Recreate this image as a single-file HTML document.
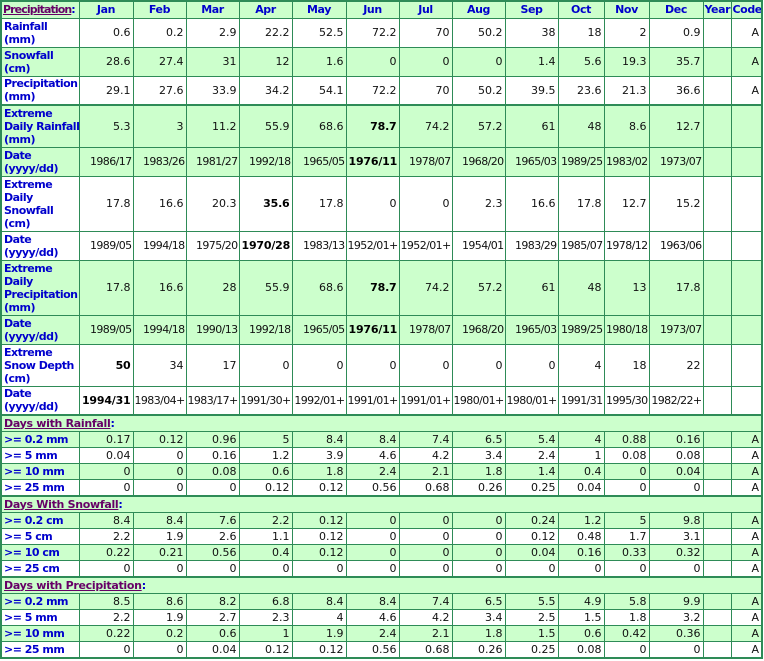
<!DOCTYPE html>
<html><head><meta charset="utf-8"><style>
body{margin:0;background:#fff;}
table{border-collapse:collapse;table-layout:fixed;width:763px;font-family:"DejaVu Sans",Verdana,sans-serif;font-size:11px;color:#111;border:2px solid #2e8b57;}
td,th{border:1px solid #2e8b57;padding:0 2px;text-align:right;overflow:hidden;white-space:nowrap;line-height:13px;}
th{color:#0000cc;text-align:center;font-weight:bold;background:#ccffcc;letter-spacing:-0.4px;padding:0 1px;}
td.l{text-align:left;color:#0000cc;font-weight:bold;white-space:normal;letter-spacing:-0.5px;padding:0 1px 0 2px;}
tr.g td{background:#ccffcc;}
.d{letter-spacing:-0.6px;padding:0 1px;}
b{font-weight:bold;color:#000;letter-spacing:-0.2px}
.s{color:#660066;text-decoration:underline;font-weight:bold;}
.c{color:#0000cc;font-weight:bold}
tr.t td{border-top:2px solid #2e8b57;}
tr.sec td{text-align:left;background:#ccffcc;letter-spacing:-0.3px}
tr.r td{height:15px;line-height:14px}
</style></head><body>
<table>
<colgroup><col style="width:78px"><col style="width:54px"><col style="width:53px"><col style="width:53px"><col style="width:53px"><col style="width:54px"><col style="width:53px"><col style="width:53px"><col style="width:53px"><col style="width:53px"><col style="width:46px"><col style="width:45px"><col style="width:54px"><col style="width:28px"><col style="width:31px"></colgroup>
<tr style="height:17px"><th style="text-align:left;letter-spacing:-0.9px;padding:0 0 0 1px"><span class="s">Precipitation</span>:</th><th>Jan</th><th>Feb</th><th>Mar</th><th>Apr</th><th>May</th><th>Jun</th><th>Jul</th><th>Aug</th><th>Sep</th><th>Oct</th><th>Nov</th><th>Dec</th><th>Year</th><th>Code</th></tr>
<tr style="height:29px"><td class="l">Rainfall (mm)</td><td>0.6</td><td>0.2</td><td>2.9</td><td>22.2</td><td>52.5</td><td>72.2</td><td>70</td><td>50.2</td><td>38</td><td>18</td><td>2</td><td>0.9</td><td></td><td>A</td></tr>
<tr class="g" style="height:29px"><td class="l">Snowfall (cm)</td><td>28.6</td><td>27.4</td><td>31</td><td>12</td><td>1.6</td><td>0</td><td>0</td><td>0</td><td>1.4</td><td>5.6</td><td>19.3</td><td>35.7</td><td></td><td>A</td></tr>
<tr style="height:29px"><td class="l">Precipitation (mm)</td><td>29.1</td><td>27.6</td><td>33.9</td><td>34.2</td><td>54.1</td><td>72.2</td><td>70</td><td>50.2</td><td>39.5</td><td>23.6</td><td>21.3</td><td>36.6</td><td></td><td>A</td></tr>
<tr class="g t" style="height:42px"><td class="l">Extreme Daily&nbsp;Rainfall (mm)</td><td>5.3</td><td>3</td><td>11.2</td><td>55.9</td><td>68.6</td><td><b>78.7</b></td><td>74.2</td><td>57.2</td><td>61</td><td>48</td><td>8.6</td><td>12.7</td><td></td><td></td></tr>
<tr class="g" style="height:29px"><td class="l">Date (yyyy/dd)</td><td class="d">1986/17</td><td class="d">1983/26</td><td class="d">1981/27</td><td class="d">1992/18</td><td class="d">1965/05</td><td><b>1976/11</b></td><td class="d">1978/07</td><td class="d">1968/20</td><td class="d">1965/03</td><td class="d">1989/25</td><td class="d">1983/02</td><td class="d">1973/07</td><td></td><td></td></tr>
<tr style="height:55px"><td class="l">Extreme Daily Snowfall (cm)</td><td>17.8</td><td>16.6</td><td>20.3</td><td><b>35.6</b></td><td>17.8</td><td>0</td><td>0</td><td>2.3</td><td>16.6</td><td>17.8</td><td>12.7</td><td>15.2</td><td></td><td></td></tr>
<tr style="height:29px"><td class="l">Date (yyyy/dd)</td><td class="d">1989/05</td><td class="d">1994/18</td><td class="d">1975/20</td><td><b>1970/28</b></td><td class="d">1983/13</td><td class="d">1952/01+</td><td class="d">1952/01+</td><td class="d">1954/01</td><td class="d">1983/29</td><td class="d">1985/07</td><td class="d">1978/12</td><td class="d">1963/06</td><td></td><td></td></tr>
<tr class="g" style="height:55px"><td class="l">Extreme Daily Precipitation (mm)</td><td>17.8</td><td>16.6</td><td>28</td><td>55.9</td><td>68.6</td><td><b>78.7</b></td><td>74.2</td><td>57.2</td><td>61</td><td>48</td><td>13</td><td>17.8</td><td></td><td></td></tr>
<tr class="g" style="height:29px"><td class="l">Date (yyyy/dd)</td><td class="d">1989/05</td><td class="d">1994/18</td><td class="d">1990/13</td><td class="d">1992/18</td><td class="d">1965/05</td><td><b>1976/11</b></td><td class="d">1978/07</td><td class="d">1968/20</td><td class="d">1965/03</td><td class="d">1989/25</td><td class="d">1980/18</td><td class="d">1973/07</td><td></td><td></td></tr>
<tr style="height:42px"><td class="l">Extreme Snow&nbsp;Depth (cm)</td><td><b>50</b></td><td>34</td><td>17</td><td>0</td><td>0</td><td>0</td><td>0</td><td>0</td><td>0</td><td>4</td><td>18</td><td>22</td><td></td><td></td></tr>
<tr style="height:29px"><td class="l">Date (yyyy/dd)</td><td><b>1994/31</b></td><td class="d">1983/04+</td><td class="d">1983/17+</td><td class="d">1991/30+</td><td class="d">1992/01+</td><td class="d">1991/01+</td><td class="d">1991/01+</td><td class="d">1980/01+</td><td class="d">1980/01+</td><td class="d">1991/31</td><td class="d">1995/30</td><td class="d">1982/22+</td><td></td><td></td></tr>
<tr class="sec t r"><td colspan="15"><span class="s">Days with Rainfall</span><span class="c">:</span></td></tr>
<tr class="g r"><td class="l">&gt;= 0.2 mm</td><td>0.17</td><td>0.12</td><td>0.96</td><td>5</td><td>8.4</td><td>8.4</td><td>7.4</td><td>6.5</td><td>5.4</td><td>4</td><td>0.88</td><td>0.16</td><td></td><td>A</td></tr>
<tr class="r"><td class="l">&gt;= 5 mm</td><td>0.04</td><td>0</td><td>0.16</td><td>1.2</td><td>3.9</td><td>4.6</td><td>4.2</td><td>3.4</td><td>2.4</td><td>1</td><td>0.08</td><td>0.08</td><td></td><td>A</td></tr>
<tr class="g r"><td class="l">&gt;= 10 mm</td><td>0</td><td>0</td><td>0.08</td><td>0.6</td><td>1.8</td><td>2.4</td><td>2.1</td><td>1.8</td><td>1.4</td><td>0.4</td><td>0</td><td>0.04</td><td></td><td>A</td></tr>
<tr class="r"><td class="l">&gt;= 25 mm</td><td>0</td><td>0</td><td>0</td><td>0.12</td><td>0.12</td><td>0.56</td><td>0.68</td><td>0.26</td><td>0.25</td><td>0.04</td><td>0</td><td>0</td><td></td><td>A</td></tr>
<tr class="sec t r"><td colspan="15"><span class="s">Days With Snowfall</span><span class="c">:</span></td></tr>
<tr class="g r"><td class="l">&gt;= 0.2 cm</td><td>8.4</td><td>8.4</td><td>7.6</td><td>2.2</td><td>0.12</td><td>0</td><td>0</td><td>0</td><td>0.24</td><td>1.2</td><td>5</td><td>9.8</td><td></td><td>A</td></tr>
<tr class="r"><td class="l">&gt;= 5 cm</td><td>2.2</td><td>1.9</td><td>2.6</td><td>1.1</td><td>0.12</td><td>0</td><td>0</td><td>0</td><td>0.12</td><td>0.48</td><td>1.7</td><td>3.1</td><td></td><td>A</td></tr>
<tr class="g r"><td class="l">&gt;= 10 cm</td><td>0.22</td><td>0.21</td><td>0.56</td><td>0.4</td><td>0.12</td><td>0</td><td>0</td><td>0</td><td>0.04</td><td>0.16</td><td>0.33</td><td>0.32</td><td></td><td>A</td></tr>
<tr class="r"><td class="l">&gt;= 25 cm</td><td>0</td><td>0</td><td>0</td><td>0</td><td>0</td><td>0</td><td>0</td><td>0</td><td>0</td><td>0</td><td>0</td><td>0</td><td></td><td>A</td></tr>
<tr class="sec t r"><td colspan="15"><span class="s">Days with Precipitation</span><span class="c">:</span></td></tr>
<tr class="g r"><td class="l">&gt;= 0.2 mm</td><td>8.5</td><td>8.6</td><td>8.2</td><td>6.8</td><td>8.4</td><td>8.4</td><td>7.4</td><td>6.5</td><td>5.5</td><td>4.9</td><td>5.8</td><td>9.9</td><td></td><td>A</td></tr>
<tr class="r"><td class="l">&gt;= 5 mm</td><td>2.2</td><td>1.9</td><td>2.7</td><td>2.3</td><td>4</td><td>4.6</td><td>4.2</td><td>3.4</td><td>2.5</td><td>1.5</td><td>1.8</td><td>3.2</td><td></td><td>A</td></tr>
<tr class="g r"><td class="l">&gt;= 10 mm</td><td>0.22</td><td>0.2</td><td>0.6</td><td>1</td><td>1.9</td><td>2.4</td><td>2.1</td><td>1.8</td><td>1.5</td><td>0.6</td><td>0.42</td><td>0.36</td><td></td><td>A</td></tr>
<tr class="r"><td class="l">&gt;= 25 mm</td><td>0</td><td>0</td><td>0.04</td><td>0.12</td><td>0.12</td><td>0.56</td><td>0.68</td><td>0.26</td><td>0.25</td><td>0.08</td><td>0</td><td>0</td><td></td><td>A</td></tr>
</table>
</body></html>
